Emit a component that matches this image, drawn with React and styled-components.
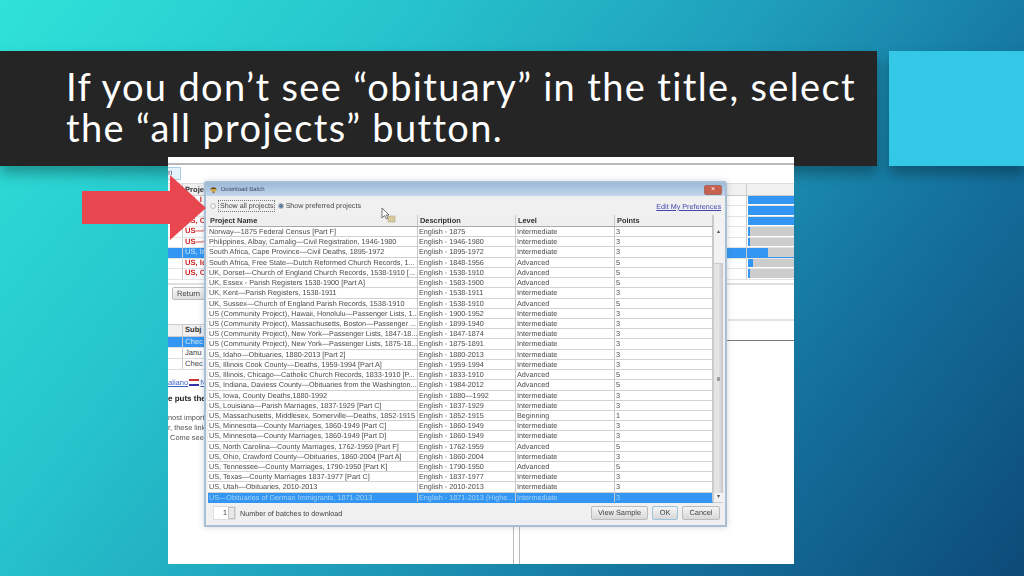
import React from 'react';
import styled, { createGlobalStyle } from 'styled-components';

const Global = createGlobalStyle`
  html, body { margin: 0; padding: 0; }
  body { width: 1024px; height: 576px; overflow: hidden; font-family: "Liberation Sans", Arial, sans-serif; text-rendering: geometricPrecision; }
`;

const Slide = styled.div`
  position: relative;
  width: 1024px; height: 576px; overflow: hidden;
  padding-top: 51px; box-sizing: border-box;
  background: linear-gradient(128deg, #2fe2d8 0%, #26c4cc 28%, #1f9fbc 52%, #14709c 76%, #0d4a78 100%);
`;
const TitleRow = styled.div`
  display: flex; gap: 12px; height: 115px;
`;
const TitleBand = styled.div`
  width: 877px; box-sizing: border-box; padding: 15px 0 0 66px;
  background: #252525; box-shadow: 0 8px 12px rgba(0,0,0,.3);
`;
const Title = styled.h1`
  margin: 0; color: #fff; font: 400 38px/41px Lato, sans-serif; letter-spacing: 1.35px;
  white-space: nowrap; text-rendering: auto;
`;
const Accent = styled.div`
  flex: 1; background: #33c9e6; box-shadow: 0 8px 12px rgba(0,0,0,.3);
`;
const Arrow = styled.svg`
  position: absolute; left: 82px; top: 173px; width: 126px; height: 70px; z-index: 3;
`;
const Shot = styled.div`
  position: relative; margin: -9px 0 0 168px; width: 626px; height: 407px;
  background: #fff; overflow: hidden; font-size: 7.6px; color: #444;
`;
const Blurred = styled.div`
  filter: blur(.35px); height: 100%; display: flex; flex-direction: column;
`;
const TopRule = styled.div`
  margin-top: 6px; height: 2px; background: #b9b9b9; flex: none;
`;
const Tool = styled.div`
  margin-top: 2px; width: 13px; height: 13px; background: #e6f2fa; border: 1px solid #a9cfe8; border-left: 0;
  box-sizing: border-box; flex: none; font-size: 8px; color: #557;
`;
const AppHead = styled.div`
  margin-top: 3px; height: 13px; display: flex; background: #f0f0f0; flex: none;
  border-top: 1px solid #ddd; border-bottom: 1px solid #ccc; box-sizing: border-box;
  font-weight: 700; color: #333; line-height: 12px;
`;
const AppRows = styled.div`
  flex: none; padding-bottom: 3px; border-bottom: 2px solid #e0e0e0;
`;
const AppRow = styled.div`
  height: 10.45px; display: flex; box-sizing: border-box; border-bottom: 1px solid #e4e4e4;
  line-height: 8.5px; font-weight: 700; color: #c22; overflow: hidden;
  background: ${p => (p.$sel ? '#3296f2' : '#fff')};
  ${p => p.$sel && 'color:#d5e9fb;font-weight:400;'}
`;
const Stub = styled.div`
  width: 15px; flex: none; border-right: 1px solid #ccc; box-sizing: border-box;
`;
const Name = styled.div`
  width: 564px; flex: none; padding-left: 2px; box-sizing: border-box; white-space: nowrap; overflow: hidden;
  border-right: 1px solid #ccc;
`;
const BarCell = styled.div`
  flex: 1; position: relative; background: ${p => (p.$empty ? 'transparent' : '#ccc')}; margin: 0 0 1px 1px;
`;
const BarFill = styled.div`
  height: 100%; background: #3296f2;
`;
const ReturnBtn = styled.div`
  margin: 2px 0 0 4px; width: 33px; height: 13px; flex: none; border: 1px solid #bbb; border-radius: 2px;
  background: linear-gradient(#f8f8f8, #dedede); color: #444; text-align: center; line-height: 12px;
  box-sizing: border-box;
`;
const RightRule = styled.div`
  margin: 19px 0 0 560px; height: 2px; background: #e2e2e2; flex: none;
`;
const SubBlock = styled.div`
  position: relative; flex: none; margin-top: 3px;
`;
const DarkRule = styled.div`
  position: absolute; left: 559px; right: 0; top: 16px; height: 1px; background: #777;
`;
const SubHead = styled.div`
  width: 559px; height: 13px; display: flex; background: #f0f0f0;
  border-top: 1px solid #ccc; border-bottom: 1px solid #ccc; box-sizing: border-box;
  font-weight: 700; color: #333; line-height: 10px;
`;
const SubRow = styled.div`
  width: 559px; height: 11px; display: flex; box-sizing: border-box; border-bottom: 1px solid #ddd; line-height: 9.5px;
  background: ${p => (p.$sel ? '#3296f2' : '#fff')}; color: ${p => (p.$sel ? '#d5e9fb' : '#444')};
`;
const SubName = styled.div`
  padding-left: 2px; white-space: nowrap;
`;
const Links = styled.div`
  margin-top: 8px; height: 10px; color: #3a5fc4; text-decoration: underline; white-space: nowrap; flex: none; line-height: 10px;
  display: flex; gap: 1px; align-items: center;
`;
const Flag = styled.span`
  display: inline-block; width: 10px; height: 7px; background: linear-gradient(#c33 0 33%, #fff 33% 66%, #33a 66%);
`;
const Bold = styled.div`
  margin-top: 6px; font-weight: 700; color: #222; font-size: 8px; line-height: 10px; flex: none;
`;
const Para = styled.div`
  margin-top: 9px; line-height: 10px; color: #555; flex: none; white-space: nowrap; font-size: 7.4px;
`;
const BottomSplit = styled.div`
  flex: 1; position: relative;
`;
const VLines = styled.div`
  position: absolute; left: 345px; top: 0; bottom: 0; width: 5px;
  border-left: 1px solid #bbb; border-right: 1px solid #bbb;
`;

const Dialog = styled.div`
  position: absolute; left: 36px; top: 24px; width: 523px; height: 346px; z-index: 2;
  box-sizing: border-box; border: 2px solid #a9c0d4; border-radius: 3px 3px 0 0;
  background: #f0f0f0; display: flex; flex-direction: column; color: #555;
  box-shadow: 0 0 6px rgba(60,90,120,.25); filter: blur(.3px);
`;
const DTitle = styled.div`
  height: 13px; flex: none; display: flex; align-items: center; gap: 3px; padding: 0 3px 0 3px;
  background: linear-gradient(#9db9d8, #c3d6ec); font-size: 6px; color: #3a4a6a;
`;
const DIcon = styled.svg`
  width: 9px; height: 9px; flex: none;
`;
const Close = styled.div`
  margin-left: auto; width: 16px; height: 8px; border-radius: 2px; background: #c8604f; border: 1px solid #a56a60;
  color: #fff; font-size: 7px; line-height: 7px; text-align: center;
`;
const Options = styled.div`
  height: 19px; flex: none; display: flex; align-items: center; padding: 1px 4px 0 4px; box-sizing: border-box;
  font-size: 7.1px; color: #444;
`;
const Radio = styled.span`
  width: 6px; height: 6px; border-radius: 50%; flex: none; box-sizing: border-box; border: 1px solid #bbb;
  background: ${p => (p.$on ? '#5a7ea0' : '#f4f4f4')}; margin-right: 2px;
`;
const FocusLabel = styled.span`
  border: 1px dotted #777; padding: 0 0 0 1px; margin-right: 3px; line-height: 10px; white-space: nowrap;
`;
const Label = styled.span`white-space: nowrap;`;
const Prefs = styled.a`
  margin-left: auto; color: #4048b0; text-decoration: underline; font-size: 7.2px;
`;
const Cursor = styled.svg`
  position: absolute; left: 175px; top: 24px; width: 16px; height: 16px;
`;
const TableWrap = styled.div`
  flex: none; display: flex; margin-left: 2px; height: 288px;
`;
const Table = styled.div`
  width: 505px; flex: none;
`;
const Grid = styled.div`
  display: grid; grid-template-columns: 210px 98px 99px 1fr; box-sizing: border-box;
  height: ${p => (p.$head ? '12px' : '10.23px')};
  background: ${p => (p.$head ? '#efefef' : p.$sel ? '#3296f2' : '#fff')};
  color: ${p => (p.$sel ? '#a8d4fa' : '#4c4c4c')};
  border-bottom: 1px solid ${p => (p.$head ? '#aaa' : p.$sel ? '#3296f2' : '#d2d2d2')};
  font-weight: ${p => (p.$head ? 700 : 400)};
  line-height: ${p => (p.$head ? '12.5px' : '9.6px')};
`;
const Cell = styled.div`
  white-space: nowrap; overflow: hidden; padding-left: 1px; box-sizing: border-box;
  font-size: ${p => (p.$head ? '7.4px' : '7.25px')};
  border-right: 1px solid #c8c8c8;
  ${p => p.$head && 'color:#333;padding-left:2px;'}
`;
const Scroll = styled.div`
  width: 10px; flex: none; display: flex; flex-direction: column;
  border-left: 1px solid #ccc; box-sizing: border-box;
`;
const ScrollEnd = styled.div`
  height: ${p => p.$h}px; flex: none; background: #f2f2f2; text-align: center; font-size: 6px; color: #555;
  line-height: ${p => p.$lh}px; border-bottom: 1px solid #ccc; box-sizing: border-box;
`;
const ScrollTrack = styled.div`
  flex: 1; display: flex; align-items: center; padding-left: 3px;
  background: linear-gradient(90deg, #e4e4e4 0 50%, #c6c6c6 100%);
`;
const Grip = styled.div`
  width: 3px; height: 4px; background: #9a9a9a; border-radius: 1px;
`;
const Footer = styled.div`
  flex: 1; display: flex; align-items: center; padding: 0 5px 2px 7px; color: #444; font-size: 7.25px;
`;
const Spin = styled.div`
  width: 23px; height: 14px; background: #fff; border: 1px solid #ddd; display: flex; justify-content: flex-end;
  align-items: center; gap: 1px; box-sizing: border-box; margin-right: 4px; line-height: 12px; font-size: 7.2px; flex: none;
`;
const SpinBtn = styled.div`
  width: 7px; height: 12px; background: #e8e8e8; border: 1px solid #c4c4c4; box-sizing: border-box;
`;
const Btn = styled.div`
  height: 14px; box-sizing: border-box; border: 1px solid ${p => (p.$def ? '#9cc4dc' : '#bbb')}; border-radius: 2px;
  background: linear-gradient(#f4f4f4, #d8d8d8); text-align: center; line-height: 12px; color: #444; flex: none;
  width: ${p => p.$w}px; margin-left: ${p => p.$ml}; font-size: 7.4px;
`;

const projects = [
  ['Norway—1875 Federal Census [Part F]', 'English - 1875', 'Intermediate', '3'],
  ['Philippines, Albay, Camalig—Civil Registration, 1946-1980', 'English - 1946-1980', 'Intermediate', '3'],
  ['South Africa, Cape Province—Civil Deaths, 1895-1972', 'English - 1895-1972', 'Intermediate', '3'],
  ['South Africa, Free State—Dutch Reformed Church Records, 1...', 'English - 1848-1956', 'Advanced', '5'],
  ['UK, Dorset—Church of England Church Records, 1538-1910 [...', 'English - 1538-1910', 'Advanced', '5'],
  ['UK, Essex - Parish Registers 1538-1900 [Part A]', 'English - 1583-1900', 'Advanced', '5'],
  ['UK, Kent—Parish Registers, 1538-1911', 'English - 1538-1911', 'Intermediate', '3'],
  ['UK, Sussex—Church of England Parish Records, 1538-1910', 'English - 1538-1910', 'Advanced', '5'],
  ['US (Community Project), Hawaii, Honolulu—Passenger Lists, 1...', 'English - 1900-1952', 'Intermediate', '3'],
  ['US (Community Project), Massachusetts, Boston—Passenger ...', 'English - 1899-1940', 'Intermediate', '3'],
  ['US (Community Project), New York—Passenger Lists, 1847-18...', 'English - 1847-1874', 'Intermediate', '3'],
  ['US (Community Project), New York—Passenger Lists, 1875-18...', 'English - 1875-1891', 'Intermediate', '3'],
  ['US, Idaho—Obituaries, 1880-2013 [Part 2]', 'English - 1880-2013', 'Intermediate', '3'],
  ['US, Illinois Cook County—Deaths, 1959-1994 [Part A]', 'English - 1959-1994', 'Intermediate', '3'],
  ['US, Illinois, Chicago—Catholic Church Records, 1833-1910 [P...', 'English - 1833-1910', 'Advanced', '5'],
  ['US, Indiana, Daviess County—Obituaries from the Washington...', 'English - 1984-2012', 'Advanced', '5'],
  ['US, Iowa, County Deaths,1880-1992', 'English - 1880—1992', 'Intermediate', '3'],
  ['US, Louisiana—Parish Marriages, 1837-1929 [Part C]', 'English - 1837-1929', 'Intermediate', '3'],
  ['US, Massachusetts, Middlesex, Somerville—Deaths, 1852-1915', 'English - 1852-1915', 'Beginning', '1'],
  ['US, Minnesota—County Marriages, 1860-1949 [Part C]', 'English - 1860-1949', 'Intermediate', '3'],
  ['US, Minnesota—County Marriages, 1860-1949 [Part D]', 'English - 1860-1949', 'Intermediate', '3'],
  ['US, North Carolina—County Marriages, 1762-1959 [Part F]', 'English - 1762-1959', 'Advanced', '5'],
  ['US, Ohio, Crawford County—Obituaries, 1860-2004 [Part A]', 'English - 1860-2004', 'Intermediate', '3'],
  ['US, Tennessee—County Marriages, 1790-1950 [Part K]', 'English - 1790-1950', 'Advanced', '5'],
  ['US, Texas—County Marriages 1837-1977 [Part C]', 'English - 1837-1977', 'Intermediate', '3'],
  ['US, Utah—Obituaries, 2010-2013', 'English - 2010-2013', 'Intermediate', '3'],
  ['US—Obituaries of German Immigrants, 1871-2013', 'English - 1871-2013 (Highe...', 'Intermediate', '3'],
];

const appRows = [
  { name: 'US, I', fill: 47 }, { name: 'US, I', fill: 47 }, { name: 'US, Ol', fill: 47 },
  { name: 'US—C', fill: 2 }, { name: 'US—C', fill: 2 },
  { name: 'US, In', fill: 20, sel: true }, { name: 'US, Id', fill: 5 }, { name: 'US, Ol', fill: 2 },
];

export default function App() {
  return (
    <Slide>
      <Global />
      <TitleRow>
        <TitleBand>
          <Title>If you don’t see “obituary” in the title, select<br />the “all projects” button.</Title>
        </TitleBand>
        <Accent />
      </TitleRow>
      <Arrow viewBox="0 0 126 70">
        <polygon points="0,18 88,18 88,2 124,35 88,67 88,51 0,51" fill="#e8474f" />
      </Arrow>
      <Shot>
        <Blurred>
          <TopRule />
          <Tool>n</Tool>
          <AppHead>
            <Stub />
            <Name>Proje</Name>
            <BarCell $empty />
          </AppHead>
          <AppRows>
            {appRows.map((r, i) => (
              <AppRow key={i} $sel={r.sel}>
                <Stub />
                <Name>{r.name}</Name>
                <BarCell>
                  <BarFill style={{ width: r.fill }} />
                </BarCell>
              </AppRow>
            ))}
          </AppRows>
          <ReturnBtn>Return</ReturnBtn>
          <RightRule />
          <SubBlock>
            <DarkRule />
            <SubHead>
              <Stub />
              <SubName>Subj</SubName>
            </SubHead>
            <SubRow $sel><Stub /><SubName>Chec</SubName></SubRow>
            <SubRow><Stub /><SubName>Janu</SubName></SubRow>
            <SubRow><Stub /><SubName>Chec</SubName></SubRow>
          </SubBlock>
          <Links>aliano <Flag /> Ne</Links>
          <Bold>e puts the</Bold>
          <Para>nost import<br />r, these link<br />&nbsp;Come see</Para>
          <BottomSplit><VLines /></BottomSplit>
        </Blurred>
        <Dialog>
          <DTitle>
            <DIcon viewBox="0 0 10 10">
              <path d="M1 5 Q5 0 9 5 Z" fill="#6a4a10" />
              <rect x="2" y="5" width="6" height="2" fill="#e8b530" />
              <rect x="4" y="7" width="2" height="2" fill="#8a6a20" />
            </DIcon>
            Download Batch
            <Close>×</Close>
          </DTitle>
          <Options>
            <Radio />
            <FocusLabel>Show all projects</FocusLabel>
            <Radio $on />
            <Label>Show preferred projects</Label>
            <Prefs>Edit My Preferences</Prefs>
          </Options>
          <Cursor viewBox="0 0 16 16">
            <path d="M1 1 L1 11 L3.5 8.5 L5.5 12 L7 11 L5 8 L8 8 Z" fill="#fff" stroke="#555" strokeWidth=".8" />
            <rect x="7" y="9" width="7" height="6" fill="#d8c9a0" stroke="#b5a57a" strokeWidth=".6" />
          </Cursor>
          <TableWrap>
            <Table>
              <Grid $head>
                <Cell $head>Project Name</Cell>
                <Cell $head>Description</Cell>
                <Cell $head>Level</Cell>
                <Cell $head>Points</Cell>
              </Grid>
              {projects.map((p, i) => (
                <Grid key={i} $sel={i === projects.length - 1}>
                  {p.map((c, j) => <Cell key={j}>{c}</Cell>)}
                </Grid>
              ))}
            </Table>
            <Scroll>
              <ScrollEnd $h={49} $lh={34}>▴</ScrollEnd>
              <ScrollTrack><Grip /></ScrollTrack>
              <ScrollEnd $h={10} $lh={9}>▾</ScrollEnd>
            </Scroll>
          </TableWrap>
          <Footer>
            <Spin>1<SpinBtn /></Spin>
            <Label>Number of batches to download</Label>
            <Btn $w={57} $ml="auto">View Sample</Btn>
            <Btn $w={26} $ml="4px" $def>OK</Btn>
            <Btn $w={38} $ml="4px">Cancel</Btn>
          </Footer>
        </Dialog>
      </Shot>
    </Slide>
  );
}
